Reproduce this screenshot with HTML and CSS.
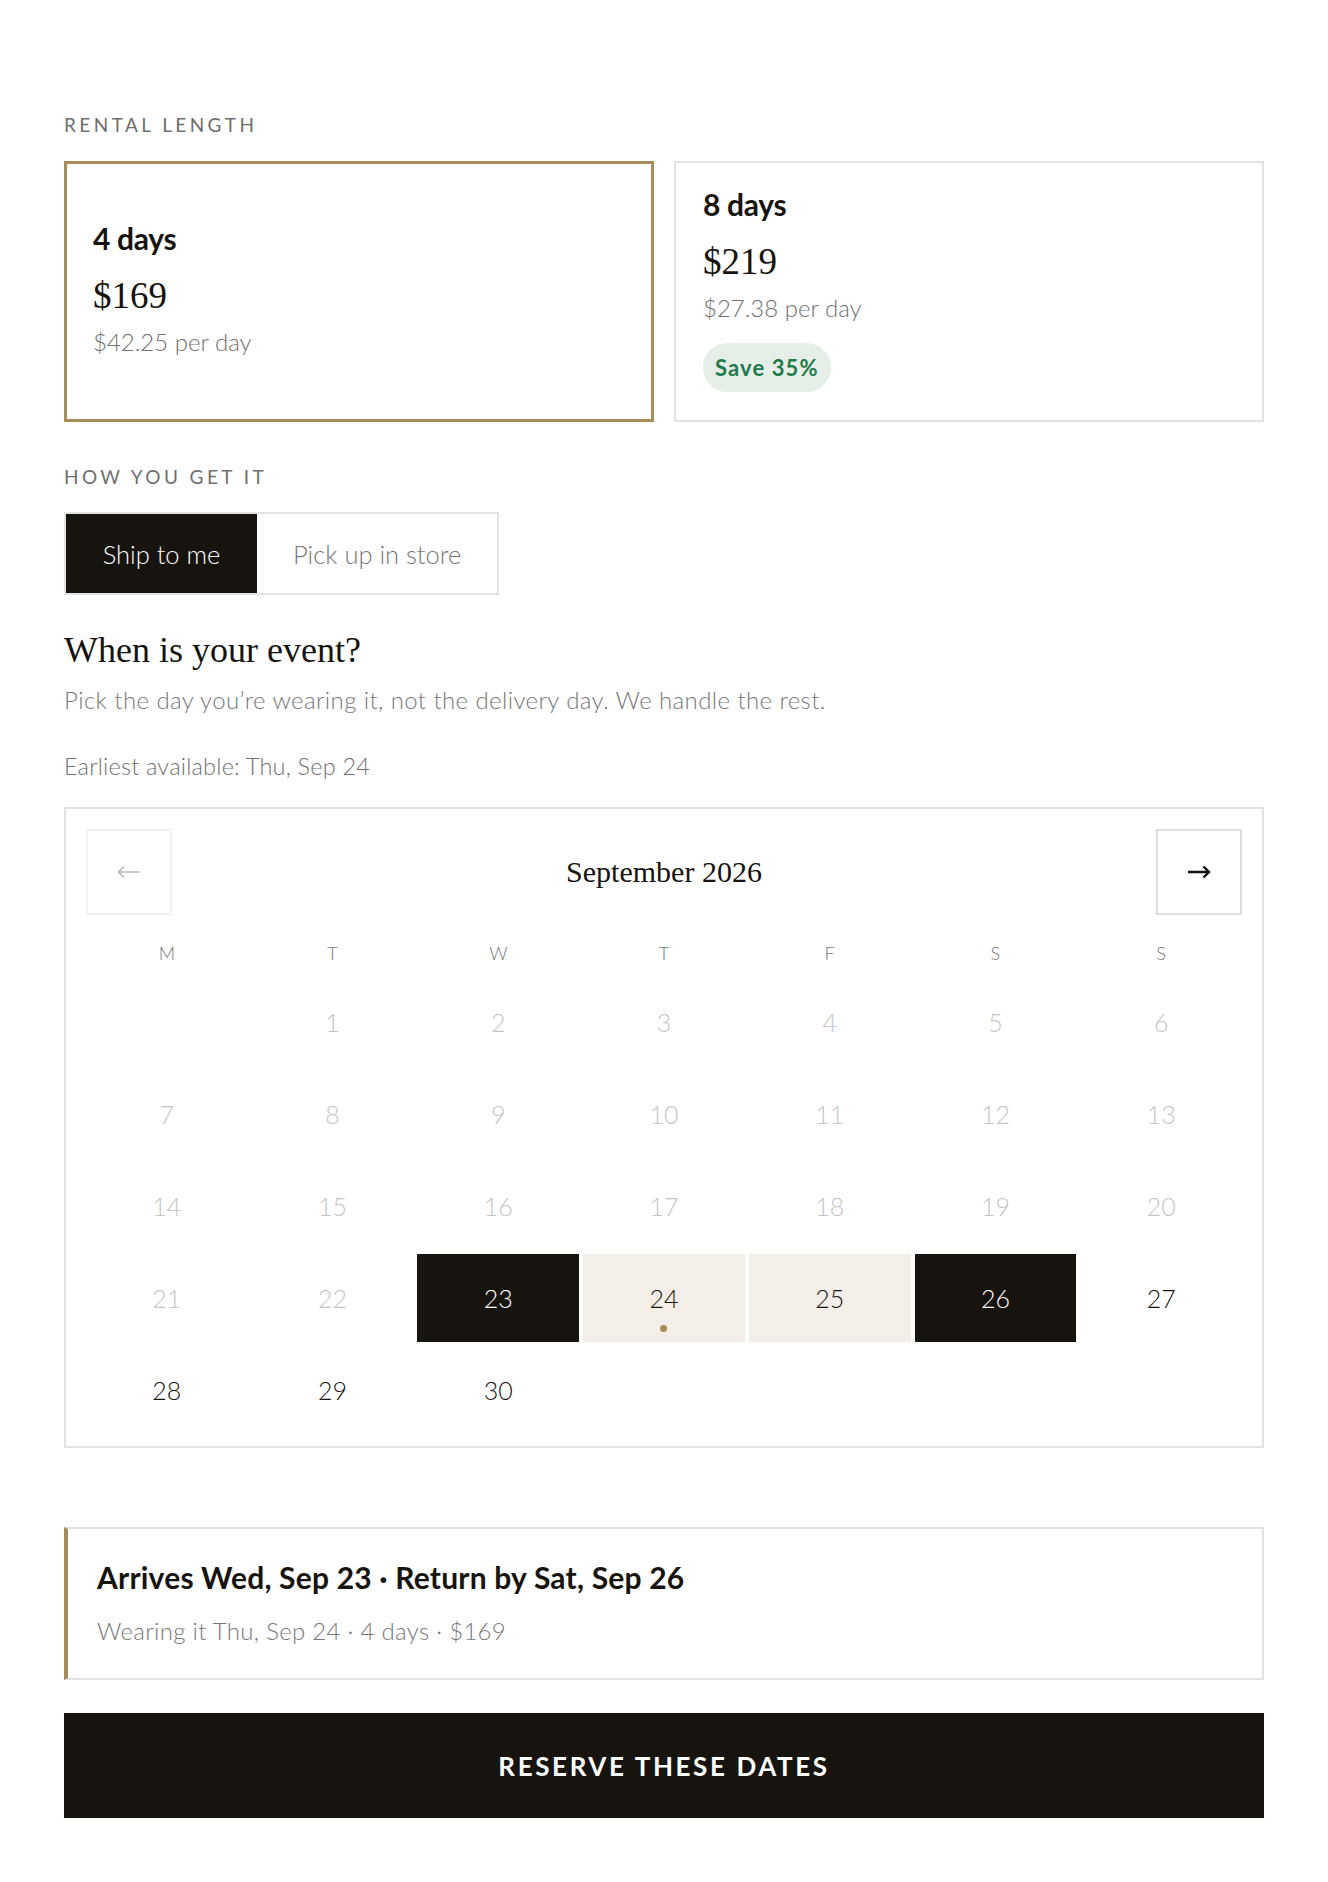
FILE: index.html
```html
<!DOCTYPE html>
<html lang="en">
<head>
<meta charset="utf-8">
<title>Rental booking</title>
<link rel="stylesheet" href="styles.css">
</head>
<body>
<main class="page">
  <div class="label">Rental length</div>
  <div class="cards">
    <div class="card card-selected">
      <div class="card-days">4 days</div>
      <div class="card-price">$169</div>
      <div class="card-per">$42.25 per day</div>
    </div>
    <div class="card">
      <div class="card-days">8 days</div>
      <div class="card-price">$219</div>
      <div class="card-per">$27.38 per day</div>
      <div class="badge">Save 35%</div>
    </div>
  </div>

  <div class="label label-how">How you get it</div>
  <div class="toggle">
    <div class="toggle-opt toggle-active">Ship to me</div>
    <div class="toggle-opt">Pick up in store</div>
  </div>

  <h2 class="heading">When is your event?</h2>
  <p class="sub">Pick the day you’re wearing it, not the delivery day. We handle the rest.</p>
  <p class="earliest">Earliest available: Thu, Sep 24</p>

  <div class="calendar">
    <div class="cal-head">
      <div class="nav nav-disabled">
        <svg width="24" height="14" viewBox="0 0 24 14"><path d="M23 7H1.5M7 1.5L1.5 7 7 12.5" fill="none" stroke="#b9b9b9" stroke-width="1.6"/></svg>
      </div>
      <div class="cal-title">September 2026</div>
      <div class="nav">
        <svg width="24" height="14" viewBox="0 0 24 14"><path d="M1 7h21M16.5 1.5L22 7l-5.5 5.5" fill="none" stroke="#111" stroke-width="2.4"/></svg>
      </div>
    </div>
    <div class="weekdays">
      <span>M</span><span>T</span><span>W</span><span>T</span><span>F</span><span>S</span><span>S</span>
    </div>
    <div class="days">
      <span class="day empty"></span>
      <span class="day off">1</span>
      <span class="day off">2</span>
      <span class="day off">3</span>
      <span class="day off">4</span>
      <span class="day off">5</span>
      <span class="day off">6</span>
      <span class="day off">7</span>
      <span class="day off">8</span>
      <span class="day off">9</span>
      <span class="day off">10</span>
      <span class="day off">11</span>
      <span class="day off">12</span>
      <span class="day off">13</span>
      <span class="day off">14</span>
      <span class="day off">15</span>
      <span class="day off">16</span>
      <span class="day off">17</span>
      <span class="day off">18</span>
      <span class="day off">19</span>
      <span class="day off">20</span>
      <span class="day off">21</span>
      <span class="day off">22</span>
      <span class="day edge">23</span>
      <span class="day range event">24</span>
      <span class="day range">25</span>
      <span class="day edge">26</span>
      <span class="day">27</span>
      <span class="day">28</span>
      <span class="day">29</span>
      <span class="day">30</span>
    </div>
  </div>

  <div class="summary">
    <div class="summary-title">Arrives Wed, Sep 23 · Return by Sat, Sep 26</div>
    <div class="summary-sub">Wearing it Thu, Sep 24 · 4 days · $169</div>
  </div>

  <button class="reserve" type="button">Reserve these dates</button>
</main>
</body>
</html>
```

FILE: styles.css
```css
* { box-sizing: border-box; }

html, body {
  margin: 0;
  padding: 0;
  background: #ffffff;
}

body {
  font-family: "Lato", "Liberation Sans", sans-serif;
  font-weight: 300;
  color: #17140f;
}

.page {
  width: 1328px;
  padding: 113px 64px 60px;
}

.label {
  font-size: 19px;
  line-height: 24px;
  letter-spacing: 0.18em;
  text-transform: uppercase;
  color: #6f6f6f;
  font-weight: 400;
}

.cards {
  display: grid;
  grid-template-columns: 1fr 1fr;
  gap: 20px;
  margin-top: 24px;
  height: 261px;
}

.card {
  border: 2px solid #e2e2e2;
  padding: 27px;
  display: flex;
  flex-direction: column;
  justify-content: center;
  align-items: flex-start;
}

.card-selected {
  border-color: #a68b5b;
  box-shadow: inset 0 0 0 1px #a68b5b;
}

.card-days {
  margin-top: -4px;
  font-size: 30px;
  line-height: 32px;
  font-weight: 700;
  color: #17140f;
  letter-spacing: -0.01em;
}

.card-price {
  margin-top: 20px;
  font-family: "Liberation Serif", "DejaVu Serif", serif;
  font-size: 37px;
  line-height: 43px;
  color: #17140f;
}

.card-per {
  margin-top: 9px;
  font-size: 24px;
  line-height: 32px;
  color: #707070;
}

.badge {
  margin-top: 19px;
  height: 49px;
  padding: 0 12px;
  border-radius: 25px;
  background: #e5efe8;
  color: #1f7a4c;
  font-weight: 700;
  font-size: 22px;
  letter-spacing: 0.05em;
  display: flex;
  align-items: center;
}

.label-how {
  margin-top: 43px;
}

.toggle {
  margin-top: 23px;
  display: inline-flex;
  border: 2px solid #e2e2e2;
  height: 83px;
}

.toggle-opt {
  display: flex;
  align-items: center;
  padding: 0 36px;
  font-size: 25.5px;
  color: #777;
}

.toggle-active {
  background: #17140f;
  color: #ffffff;
  width: 191px;
  justify-content: center;
  padding: 0;
}

.heading {
  margin: 34px 0 0;
  font-family: "Liberation Serif", "DejaVu Serif", serif;
  font-weight: 400;
  font-size: 36px;
  line-height: 42px;
  color: #17140f;
}

.sub {
  margin: 13px 0 0;
  font-size: 24px;
  line-height: 32px;
  letter-spacing: 0.4px;
  color: #777;
}

.earliest {
  margin: 34px 0 0;
  font-size: 23.5px;
  line-height: 32px;
  letter-spacing: 0.2px;
  color: #707070;
}

.calendar {
  margin-top: 25px;
  border: 2px solid #e2e2e2;
  padding: 20px 20px 12px;
}

.cal-head {
  display: flex;
  align-items: center;
  justify-content: space-between;
}

.nav {
  width: 86px;
  height: 86px;
  border: 2px solid #dedede;
  display: flex;
  align-items: center;
  justify-content: center;
}

.nav-disabled {
  border-color: #f1f1f1;
}

.cal-title {
  font-family: "Liberation Serif", "DejaVu Serif", serif;
  font-size: 30px;
  color: #17140f;
}

.weekdays {
  margin-top: 26px;
  display: grid;
  grid-template-columns: repeat(7, 1fr);
  column-gap: 4px;
  font-size: 18px;
  line-height: 24px;
  color: #777;
  text-align: center;
}

.days {
  margin-top: 13px;
  display: grid;
  grid-template-columns: repeat(7, 1fr);
  grid-auto-rows: 88px;
  gap: 4px;
}

.day {
  position: relative;
  display: flex;
  align-items: center;
  justify-content: center;
  font-size: 25px;
  color: #17140f;
}

.day.off {
  color: #c4c4c4;
}

.day.edge {
  background: #17140f;
  color: #ffffff;
}

.day.range {
  background: #f3eee7;
}

.day.event::after {
  content: "";
  position: absolute;
  left: 50%;
  top: 71px;
  width: 7px;
  height: 7px;
  margin-left: -3.5px;
  border-radius: 50%;
  background: #a68b5b;
}

.summary {
  margin-top: 79px;
  border: 2px solid #e2e2e2;
  border-left: 4px solid #a68b5b;
  padding: 31px 29px 31px;
}

.summary-title {
  font-size: 30px;
  line-height: 34px;
  font-weight: 700;
  color: #17140f;
  letter-spacing: 0.2px;
}

.summary-sub {
  margin-top: 21px;
  font-size: 24px;
  line-height: 32px;
  letter-spacing: 0.3px;
  color: #777;
}

.reserve {
  display: block;
  width: 100%;
  margin-top: 33px;
  height: 105px;
  border: 0;
  background: #17140f;
  color: #ffffff;
  font-family: "Lato", "Liberation Sans", sans-serif;
  font-weight: 700;
  font-size: 26px;
  letter-spacing: 0.1em;
  text-transform: uppercase;
}
```
